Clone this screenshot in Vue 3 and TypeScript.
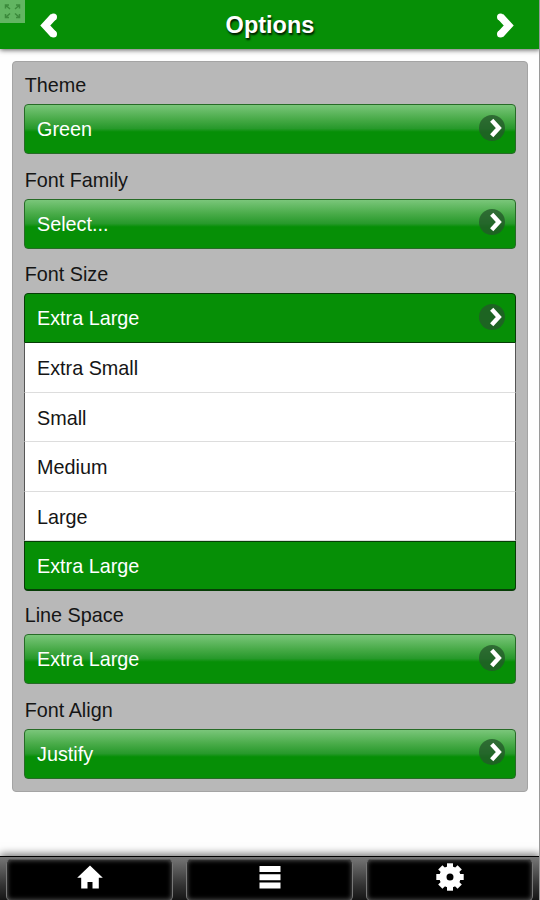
<script setup lang="ts">
import { ref } from 'vue'

interface Field {
  label: string
  value: string
  options?: string[]
}

const fields = ref<Field[]>([
  { label: 'Theme', value: 'Green' },
  { label: 'Font Family', value: 'Select...' },
  {
    label: 'Font Size',
    value: 'Extra Large',
    options: ['Extra Small', 'Small', 'Medium', 'Large', 'Extra Large'],
  },
  { label: 'Line Space', value: 'Extra Large' },
  { label: 'Font Align', value: 'Justify' },
])

const cogTeeth = [0, 45, 90, 135, 180, 225, 270, 315]
</script>

<template>
  <div class="screen">
    <header class="header">
      <span class="expand">
        <svg width="25" height="23" viewBox="0 0 25 23" fill="none" stroke="#3c8a3c" stroke-width="1.5">
          <path d="M10 9 6 5.500M5.500 8.500V5H9M15 9 19 5.500M16 5H19.500V8.500M10 13.500 6 17M5.500 14V17.500H9M15 13.500 19 17M16 17.500H19.500V14" />
        </svg>
      </span>
      <button class="nav" aria-label="Back">
        <svg width="20" height="28" viewBox="0 0 20 28">
          <path d="M14.300 4.800 6.300 13.500 14.300 22.200" fill="none" stroke="#fff" stroke-width="7.400" />
          <circle cx="14.500" cy="5" r="3.500" fill="#fff" />
          <circle cx="14.500" cy="22" r="3.500" fill="#fff" />
        </svg>
      </button>
      <h1>Options</h1>
      <button class="nav" aria-label="Forward">
        <svg width="20" height="28" viewBox="0 0 20 28">
          <path d="M5.700 4.800 13.700 13.500 5.700 22.200" fill="none" stroke="#fff" stroke-width="7.400" />
          <circle cx="5.500" cy="5" r="3.500" fill="#fff" />
          <circle cx="5.500" cy="22" r="3.500" fill="#fff" />
        </svg>
      </button>
    </header>

    <main class="main">
      <section class="panel">
        <div v-for="field in fields" :key="field.label" class="field" :class="{ expanded: field.options }">
          <div class="label">{{ field.label }}</div>
          <div class="select" :class="{ open: field.options }">
            <span>{{ field.value }}</span>
            <svg class="arrow" width="28" height="28" viewBox="0 0 28 28">
              <circle cx="14" cy="14" r="13" fill="#24582a" fill-opacity=".78" />
              <path d="M13.700 6.300 20.800 14 13.700 21.700" fill="none" stroke="#fff" stroke-width="4.400" />
            </svg>
          </div>
          <ul v-if="field.options" class="options">
            <li v-for="option in field.options" :key="option" :class="{ selected: option === field.value }">
              {{ option }}
            </li>
          </ul>
        </div>
      </section>
    </main>

    <footer class="footer">
      <div class="tab">
        <svg width="28" height="28" viewBox="0 0 28 28" fill="#fff">
          <path d="M14 2.500 26.800 14.700H22.800V25.500H16.500V19H11.500V25.500H5.200V14.700H1.200Z" />
        </svg>
      </div>
      <div class="tab">
        <svg width="28" height="28" viewBox="0 0 28 28" fill="#fff">
          <path d="M3.500 3H24.500V9H3.500ZM3.500 11.200H24.500V17.200H3.500ZM3.500 19.400H24.500V25.400H3.500Z" />
        </svg>
      </div>
      <div class="tab">
        <svg width="28" height="28" viewBox="0 0 28 28">
          <rect
            v-for="angle in cogTeeth"
            :key="angle"
            x="11"
            y="0.3"
            width="6"
            height="8"
            fill="#fff"
            :transform="`rotate(${angle} 14 14)`"
          />
          <circle cx="14" cy="14" r="7.1" fill="none" stroke="#fff" stroke-width="7.2" />
        </svg>
      </div>
    </footer>
  </div>
</template>

<style>
body {
  margin: 0;
  background: #fff;
}
</style>

<style scoped>
.screen {
  box-sizing: border-box;
  display: flex;
  flex-direction: column;
  width: 540px;
  height: 900px;
  overflow: hidden;
  border-right: 1px solid #999;
  background: #fefefe;
  color: #151515;
  font-family: "Liberation Sans", Arial, sans-serif;
  font-size: 19.8px;
}

.header {
  position: relative;
  flex: none;
  display: flex;
  align-items: center;
  justify-content: space-between;
  box-sizing: border-box;
  width: 540px;
  height: 49px;
  padding: 0 25px 0 39px;
  background: #068f06;
  box-shadow: 0 1px 5px rgba(0, 0, 0, .65);
}

.expand {
  position: absolute;
  top: 0;
  left: 0;
  width: 25px;
  height: 23px;
  background: #62b562;
}

svg {
  display: block;
}

.nav {
  padding: 2px 0 0;
  border: 0;
  background: none;
}

h1 {
  margin: 1px 14px 0 0;
  color: #fff;
  font-size: 23.5px;
  line-height: 28px;
  text-shadow: 1px 2px 2px rgba(0, 0, 0, .85);
}

.main {
  flex: 1;
  padding: 12px 12px 0;
}

.panel {
  box-sizing: border-box;
  width: 516px;
  height: 731px;
  padding: 5px 11px 0;
  border: 1px solid #a4a4a4;
  border-radius: 4px;
  background: #b8b8b8;
}

.field {
  margin-bottom: 7.5px;
}

.field.expanded {
  margin-bottom: 6.5px;
}

.label {
  height: 37px;
  padding-left: .7px;
  line-height: 37px;
}

.select {
  display: flex;
  align-items: center;
  justify-content: space-between;
  box-sizing: border-box;
  height: 50px;
  padding: 0 9px 0 12px;
  border: 1px solid #276b27;
  border-radius: 4px;
  background: linear-gradient(#7ac67a, #47aa47 30%, #27992b 49%, #068f06 56%);
  color: #fff;
}

.select span {
  padding-top: 1px;
}

.arrow {
  margin-top: -3px;
}

.select.open {
  border-color: #063d06;
  border-radius: 4px 4px 0 0;
  background: #068f06;
}

.options {
  margin: 0;
  padding: 0;
  list-style: none;
}

.options li {
  box-sizing: border-box;
  height: 49.5px;
  padding-left: 12px;
  border: 1px solid #555;
  border-width: 0 1px;
  border-bottom: 1px solid #ddd;
  background: #fff;
  line-height: 50px;
}

.options li.selected {
  border: 1px solid #063d06;
  border-bottom-width: 2px;
  border-radius: 0 0 4px 4px;
  background: #068f06;
  color: #fff;
  line-height: 48px;
}

.footer {
  flex: none;
  display: flex;
  gap: 13px;
  box-sizing: border-box;
  width: 540px;
  height: 44px;
  padding: 2px 7px 0 6px;
  border-top: 1px solid #000;
  background: linear-gradient(#777, #333 65%, #151515);
  box-shadow: 0 -2px 8px rgba(0, 0, 0, .55);
}

.tab {
  flex: 1;
  display: flex;
  justify-content: center;
  box-sizing: border-box;
  height: 42px;
  padding-top: 3px;
  border: 1px solid #777;
  border-top-color: #555;
  border-radius: 5px;
  background: #000;
  box-shadow: inset 0 0 5px #666;
}
</style>
